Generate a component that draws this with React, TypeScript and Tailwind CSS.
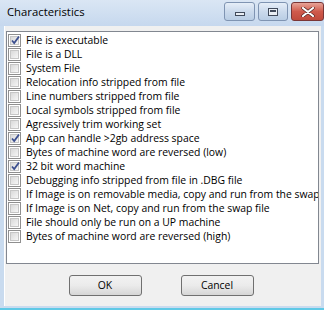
import React from "react";

const items: [string, boolean][] = [
  ["File is executable", true],
  ["File is a DLL", false],
  ["System File", false],
  ["Relocation info stripped from file", false],
  ["Line numbers stripped from file", false],
  ["Local symbols stripped from file", false],
  ["Agressively trim working set", false],
  ["App can handle >2gb address space", true],
  ["Bytes of machine word are reversed (low)", false],
  ["32 bit word machine", true],
  ["Debugging info stripped from file in .DBG file", false],
  ["If Image is on removable media, copy and run from the swap file", false],
  ["If Image is on Net, copy and run from the swap file", false],
  ["File should only be run on a UP machine", false],
  ["Bytes of machine word are reversed (high)", false],
];

function CheckBox({ checked }: { checked: boolean }) {
  return (
    <div className="w-[13px] h-[13px] shrink-0 border border-[#8f8f8f] bg-white p-px">
      <div className="w-full h-full border border-[#c6c6c6] bg-gradient-to-br from-[#d9d9d9] to-[#f6f6f6] relative">
        {checked && (
          <svg className="absolute left-[-1px] top-[-2px]" width="11" height="11" viewBox="0 0 11 11">
            <path d="M2 5.5 L4.2 8 L9 1.5" fill="none" stroke="#3c4f8f" strokeWidth="1.8" />
          </svg>
        )}
      </div>
    </div>
  );
}

export default function App() {
  const font = { fontFamily: "'Open Sans', 'Liberation Sans', sans-serif" };
  return (
    <div className="w-[324px] h-[310px] flex flex-col bg-[#c9dbef] overflow-hidden" style={font}>
      <div className="h-[26px] shrink-0 flex items-start bg-gradient-to-b from-[#dae6f4] to-[#c6d8ee]">
        <div className="pl-[7px] pt-[4px] text-[11.3px] text-black leading-[16px]">Characteristics</div>
        <div className="ml-auto flex items-start pt-[2px] gap-[3px]">
          <div className="w-[31px] h-[19px] rounded-[3px] border border-[#7f94b2] bg-gradient-to-b from-[#e6eef8] via-[#cbdaec] to-[#b9cde4] flex items-center justify-center">
            <div className="w-[10px] h-[4px] mt-[5px] bg-[#e9eef4] border border-[#404a5a]" />
          </div>
          <div className="w-[30px] h-[19px] rounded-[3px] border border-[#7f94b2] bg-gradient-to-b from-[#e6eef8] via-[#cbdaec] to-[#b9cde4] flex items-center justify-center">
            <div className="w-[10px] h-[8px] border border-[#404a5a] bg-[#e9eef4] flex items-center justify-center">
              <div className="w-[6px] h-[4px] border-t-2 border-[#404a5a]" />
            </div>
          </div>
          <div className="w-[33px] h-[19px] rounded-[3px] border border-[#7a3636] bg-gradient-to-b from-[#e6a398] via-[#cf5a4c] to-[#c04a3c] flex items-center justify-center">
            <svg width="14" height="10" viewBox="0 0 14 10">
              <path d="M2 1 L12 9 M12 1 L2 9" stroke="#4a2020" strokeWidth="3.4" strokeLinecap="round" />
              <path d="M2 1 L12 9 M12 1 L2 9" stroke="#ffffff" strokeWidth="2.2" strokeLinecap="round" />
            </svg>
          </div>
        </div>
      </div>
      <div className="flex-1 flex flex-col pl-[4px] pr-[3px] pb-[2px] bg-[#c9dbef]">
        <div className="flex-1 flex flex-col bg-[#f0f0f0] border-l border-white">
          <div className="mt-[5px] ml-[1px] mr-[2px] h-[233px] border border-[#828790] bg-white overflow-hidden">
            <div className="pt-[1px] pl-[1px] flex flex-col">
              {items.map(([label, checked]) => (
                <div key={label} className="h-[14px] flex items-center gap-[5px] whitespace-nowrap">
                  <CheckBox checked={checked} />
                  <span className="text-[10.4px] leading-[14px] text-black">{label}</span>
                </div>
              ))}
            </div>
          </div>
          <div className="flex justify-center gap-[39px] mt-[11px] pr-[4px]">
            <button className="w-[73px] h-[21px] rounded-[3px] border border-[#707070] bg-gradient-to-b from-[#f2f2f2] via-[#ebebeb] to-[#d6d6d6] text-[10.4px] text-black">OK</button>
            <button className="w-[73px] h-[21px] rounded-[3px] border border-[#707070] bg-gradient-to-b from-[#f2f2f2] via-[#ebebeb] to-[#d6d6d6] text-[10.4px] text-black">Cancel</button>
          </div>
        </div>
      </div>
      <div className="h-[2px] shrink-0 bg-[#5fc9e6]" />
    </div>
  );
}
